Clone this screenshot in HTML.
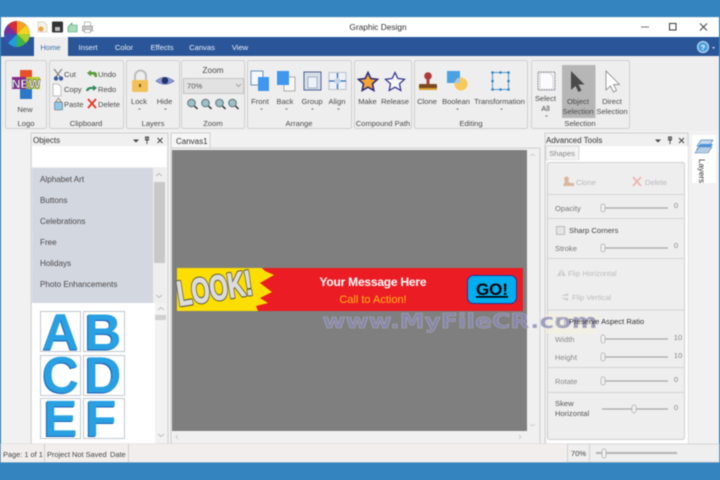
<!DOCTYPE html>
<html><head><meta charset="utf-8"><style>
html,body{margin:0;padding:0;width:720px;height:480px;overflow:hidden;background:#3484c0}
svg{display:block;filter:blur(.45px)}
text{font-family:"Liberation Sans",sans-serif;font-size:7.600px;fill:#4a4a4a}
.m{text-anchor:middle}
.grp{fill:#eeeeee;stroke:#cfcfcf;stroke-width:1}
.th{fill:#f1f1f1;stroke:#a8a8a8;stroke-width:.7}
.tl{fill:none;stroke:#a8a8a8;stroke-width:1.300}
.tile{fill:#fff;stroke:#c2c8d0;stroke-width:1}
.lt{font-weight:bold;font-size:51px;fill:#29a0e2;text-anchor:middle}
.ls{font-weight:bold;font-size:51px;fill:#1a5fb4;text-anchor:middle}
.obj{font-size:8.100px}
</style></head><body>
<svg width="720" height="480" viewBox="0 0 720 480" xmlns="http://www.w3.org/2000/svg">
<rect width="720" height="480" fill="#3484c0"/>
<rect x="1" y="17" width="718" height="445" fill="#eeeeee"/>
<rect x="1" y="18" width="718" height="19" fill="#ffffff"/>
<rect x="1" y="37" width="718" height="19" fill="#2a5699"/>
<rect x="34" y="37" width="34" height="20" fill="#eeeeee"/>
<text x="50.500" y="50" class="m" style="fill:#3a6ea8">Home</text>
<text x="88" y="50" class="m" style="fill:#e8eef6">Insert</text><text x="124" y="50" class="m" style="fill:#e8eef6">Color</text><text x="162" y="50" class="m" style="fill:#e8eef6">Effects</text><text x="202" y="50" class="m" style="fill:#e8eef6">Canvas</text><text x="240" y="50" class="m" style="fill:#e8eef6">View</text>
<text x="378" y="30" class="m" style="font-size:8.300px;fill:#333">Graphic Design</text>
<path d="M641 27h8" stroke="#777" stroke-width="1"/>
<rect x="669.500" y="23.500" width="6.500" height="6.500" fill="none" stroke="#333" stroke-width="1"/>
<path d="M700 23.500l7 7M707 23.500l-7 7" stroke="#444" stroke-width="1"/>
<circle cx="703" cy="47" r="5.500" fill="#4a9fe0" stroke="#cfe4f6" stroke-width="1"/><text x="703" y="50" class="m" style="fill:#fff;font-weight:bold">?</text><path d="M712 47l3 0-1.500 2z" fill="#cfe0f0"/>
<!-- logo wheel -->
<circle cx="17" cy="34" r="13" fill="#2a5699"/>
<path d="M17 34L17 21A13 13 0 0 1 26 25z" fill="#f6a11c"/>
<path d="M17 34L26 25A13 13 0 0 1 30 34z" fill="#f7d31f"/>
<path d="M17 34L30 34A13 13 0 0 1 26 43z" fill="#a8d12a"/>
<path d="M17 34L26 43A13 13 0 0 1 17 47z" fill="#3cb44a"/>
<path d="M17 34L17 47A13 13 0 0 1 8 43z" fill="#1e9fd8"/>
<path d="M17 34L8 43A13 13 0 0 1 4 34z" fill="#3b4fb0"/>
<path d="M17 34L4 34A13 13 0 0 1 8 25z" fill="#7a2f9c"/>
<path d="M17 34L8 25A13 13 0 0 1 17 21z" fill="#d92a3a"/>
<!-- QAT icons -->
<path d="M38 22h6l3 3v7h-9z" fill="#f6f2e8" stroke="#cfc8b8" stroke-width=".7"/><circle cx="41" cy="29" r="2.500" fill="#eea33a"/>
<rect x="52" y="21.500" width="11" height="11" rx="1" fill="#333"/><rect x="55" y="27" width="5" height="4" fill="#bbb"/>
<path d="M68 27l4-4v2h5v7h-9z" fill="#a8dcb8" stroke="#3d9a62" stroke-width=".6"/>
<rect x="82.500" y="26" width="10" height="5" fill="#c8c8c8" stroke="#888" stroke-width=".6"/><rect x="84.500" y="22" width="6" height="4" fill="#fff" stroke="#999" stroke-width=".6"/><rect x="84.500" y="29.500" width="6" height="3" fill="#fff" stroke="#999" stroke-width=".6"/>
<!-- ribbon groups -->
<rect x="5.500" y="60.500" width="41" height="68" rx="2" class="grp"/>
<rect x="49.500" y="60.500" width="74" height="68" rx="2" class="grp"/>
<rect x="126.500" y="60.500" width="53" height="68" rx="2" class="grp"/>
<rect x="181.500" y="60.500" width="63" height="68" rx="2" class="grp"/>
<rect x="247.500" y="60.500" width="104" height="68" rx="2" class="grp"/>
<rect x="354.500" y="60.500" width="57" height="68" rx="2" class="grp"/>
<rect x="414.500" y="60.500" width="113" height="68" rx="2" class="grp"/>
<rect x="531.500" y="60.500" width="98" height="68" rx="2" class="grp"/>
<text x="26" y="126" class="m">Logo</text><text x="86" y="126" class="m">Clipboard</text><text x="153" y="126" class="m">Layers</text><text x="213" y="126" class="m">Zoom</text><text x="299" y="126" class="m">Arrange</text><text x="383" y="126" class="m" style="font-size:7.500px">Compound Path</text><text x="471" y="126" class="m">Editing</text><text x="580" y="126" class="m">Selection</text>
<!-- New icon -->
<rect x="20" y="70" width="12" height="14" fill="#e8502a"/><rect x="20" y="84" width="12" height="15" fill="#2a78c8"/><rect x="12" y="77" width="14" height="12" fill="#8a2a90"/><rect x="26" y="77" width="14" height="12" fill="#b8cc30"/>
<text x="26" y="88" class="m" style="font-weight:bold;font-size:11.500px;fill:#fff;stroke:#3c2a5c;stroke-width:.4" textLength="29" lengthAdjust="spacingAndGlyphs">NEW</text>
<text x="25" y="112" class="m">New</text>
<!-- Clipboard -->
<path d="M54 69l7 9M62 69l-7 9" stroke="#888" stroke-width="1.300"/><circle cx="56" cy="78.500" r="2.200" fill="#3a5f9c"/><circle cx="61" cy="78.500" r="2.200" fill="#3a5f9c"/>
<text x="64" y="77">Cut</text>
<path d="M53 84h5l3 3v9h-8z" fill="#fff" stroke="#aaa" stroke-width=".7"/>
<text x="64" y="92">Copy</text>
<rect x="54.500" y="102" width="8" height="8" rx="1" fill="#8ec8ea" stroke="#666" stroke-width=".6"/><path d="M58.500 98l3 4h-6z" fill="#e8e0d0" stroke="#666" stroke-width=".6"/>
<text x="64" y="107">Paste</text>
<path d="M87 73l4-3v2h3c2 0 3 1 3 3v2h-2.500c0-2-1-2.500-2.500-2.500h-1v2z" fill="#5a9a3c"/>
<text x="98" y="77">Undo</text>
<path d="M97 88l-4-3v2h-3c-2 0-4 2-4 4h2.500c0-1.500 1.500-2 2.500-2h2v2z" fill="#2c8a5a"/>
<text x="98" y="92">Redo</text>
<path d="M88 99l8 9M96 99l-8 9" stroke="#e2362a" stroke-width="1.800"/>
<text x="98" y="107">Delete</text>
<!-- Lock / Hide -->
<path d="M135 82v-6a5 5 0 0 1 11 0v6" fill="none" stroke="#bdbdbd" stroke-width="2"/>
<rect x="132" y="80" width="16" height="12" rx="1.500" fill="#f2c25a"/><rect x="139" y="84" width="2" height="3" fill="#7a5a20"/>
<text x="139" y="104" class="m">Lock</text><path d="M138 108.500h3l-1.500 1.500z" fill="#777"/>
<path d="M156 81q8-7.500 18 0q-9 6.500-18 0z" fill="#8a9cd8" stroke="#4a5a9c" stroke-width=".6"/><circle cx="165" cy="80.500" r="3.300" fill="#23306a"/>
<text x="164.500" y="104" class="m">Hide</text><path d="M164 108.500h3l-1.500 1.500z" fill="#777"/>
<!-- Zoom -->
<text x="213" y="73" class="m" style="font-size:8.300px">Zoom</text>
<rect x="183.500" y="78.500" width="60" height="15" fill="#e2e2e2" stroke="#c4c4c4"/>
<text x="187" y="88.500" style="fill:#555">70%</text><path d="M236 84l2.500 2.500 2.500-2.500" fill="none" stroke="#888" stroke-width=".7"/>
<g fill="#9cc0c8" stroke="#5f6f78" stroke-width="1">
<circle cx="191.500" cy="103" r="3.800"/><circle cx="205.500" cy="103" r="3.800"/><circle cx="219.500" cy="103" r="3.800"/><circle cx="232.500" cy="103" r="3.800"/>
</g>
<path d="M194.500 106l3 3M208.500 106l3 3M222.500 106l3 3M235.500 106l3 3" stroke="#333" stroke-width="1.500"/>
<!-- Arrange -->
<rect x="251" y="71" width="12" height="14" fill="#f4f8fc" stroke="#4a7ab0" stroke-width=".8"/><rect x="258" y="77" width="11" height="14" fill="#3f97ee"/>
<text x="260" y="104" class="m">Front</text><path d="M260 108.500h3l-1.500 1.500z" fill="#777"/>
<rect x="284" y="77" width="11" height="14" fill="#f6f6f6" stroke="#9a9a9a" stroke-width=".8"/><rect x="277" y="71" width="12" height="14" fill="#3f97ee"/>
<text x="285" y="104" class="m">Back</text><path d="M285 108.500h3l-1.500 1.500z" fill="#777"/>
<rect x="304" y="72" width="17" height="18" fill="#d6dfe8" stroke="#2a3f80" stroke-width=".8"/><rect x="308" y="77" width="9" height="11" fill="#eef3f8" stroke="#7a8ea8" stroke-width=".6"/>
<text x="312" y="104" class="m">Group</text><path d="M311 108.500h3l-1.500 1.500z" fill="#777"/>
<rect x="329" y="72.500" width="17" height="17" fill="#eef2f6" stroke="#a8b0b8" stroke-width=".7"/><path d="M337.500 73v16M329 81h17" stroke="#2a6ab8" stroke-width="1.300"/><circle cx="337.500" cy="81" r="3" fill="#c4d4e4"/>
<text x="337" y="104" class="m">Align</text><path d="M337 108.500h3l-1.500 1.500z" fill="#777"/>
<!-- Compound -->
<path d="M368 72.500l2.800 6 6.700.8-5 4.500 1.300 6.700-5.800-3.300-5.800 3.300 1.300-6.700-5-4.500 6.700-.8z" fill="#f6a432" stroke="#2c2c80" stroke-width="1.600"/>
<text x="367.500" y="104" class="m">Make</text>
<path d="M395 72.500l2.800 6 6.700.8-5 4.500 1.300 6.700-5.800-3.300-5.800 3.300 1.300-6.700-5-4.500 6.700-.8z" fill="#f6f6f6" stroke="#2c2c90" stroke-width="1.200"/>
<text x="395" y="104" class="m">Release</text>
<!-- Editing -->
<circle cx="428" cy="76" r="3.800" fill="#b03a3a"/><rect x="426.500" y="79" width="3" height="5" fill="#a84040"/><rect x="419" y="84" width="18" height="5" rx="1" fill="#7a4a20"/><rect x="419" y="88" width="18" height="2" fill="#d8a030"/>
<rect x="447" y="71" width="13" height="12" fill="#4aa2e0"/><circle cx="461" cy="84" r="6.500" fill="#f8c95a"/><path d="M454.500 83h5.500v-5.500a6.500 6.500 0 0 0-5.500 5.500z" fill="#a8c8e0"/>
<text x="427" y="104" class="m">Clone</text><text x="456" y="104" class="m">Boolean</text><path d="M456 108.500h3l-1.500 1.500z" fill="#777"/>
<rect x="492.500" y="72.500" width="16" height="17" fill="none" stroke="#2a80c8" stroke-width=".8"/>
<g fill="#2a80c8"><circle cx="492.500" cy="72.500" r="1.300"/><circle cx="500.500" cy="72.500" r="1.300"/><circle cx="508.500" cy="72.500" r="1.300"/><circle cx="492.500" cy="89.500" r="1.300"/><circle cx="500.500" cy="89.500" r="1.300"/><circle cx="508.500" cy="89.500" r="1.300"/><circle cx="492.500" cy="81" r="1.300"/><circle cx="508.500" cy="81" r="1.300"/></g>
<text x="499.500" y="104" class="m">Transformation</text><path d="M500 108.500h3l-1.500 1.500z" fill="#777"/>
<!-- Selection -->
<rect x="538" y="72" width="17" height="18" fill="none" stroke="#555" stroke-width=".7" stroke-dasharray="1.500 1"/><path d="M540 73h10l3 4v12h-13z" fill="#fbfbff" stroke="#c0c8d4" stroke-width=".6"/>
<text x="545.500" y="101" class="m">Select</text><text x="545.500" y="111" class="m">All</text><path d="M545 115.500h3l-1.500 1.500z" fill="#777"/>
<rect x="562" y="65" width="33.500" height="53" fill="#b6b6b6"/>
<path d="M571 71l0 19 4.500-4 3 6 3-1.500-3-6h6z" fill="#4a4a4a"/>
<text x="578" y="104" class="m">Object</text><text x="578" y="114" class="m">Selection</text>
<path d="M606 71l0 19 4.500-4 3 6 3-1.500-3-6h6z" fill="#fff" stroke="#777" stroke-width=".7"/>
<text x="612" y="104" class="m">Direct</text><text x="612" y="114" class="m">Selection</text>
<!-- body -->
<rect x="1" y="130" width="718" height="314" fill="#f1f1f1"/>
<!-- objects panel -->
<rect x="31" y="133" width="137" height="311" fill="#f0f0f0" stroke="#cfcfcf"/>
<rect x="32" y="146" width="135" height="21" fill="#fff"/>
<text x="33" y="143" style="fill:#333;font-size:8px">Objects</text>
<path d="M133 139.500h6l-3 3z" fill="#444"/><path d="M147 137v4M145.500 137h3v3h-3zM147 141v3" stroke="#444" stroke-width=".9" fill="none"/><path d="M157.500 138l5 5M162.500 138l-5 5" stroke="#444" stroke-width="1"/>
<rect x="32" y="168" width="121" height="135" fill="#d3d7e0"/>
<rect x="153" y="168" width="12" height="135" fill="#eeeeee"/><rect x="154" y="182" width="11" height="81" fill="#c8c8c8"/>
<path d="M156 176l3-2.500 3 2.500M156 295l3 2.500 3-2.500" fill="none" stroke="#aaa" stroke-width=".8"/>
<text x="40" y="182" class="obj">Alphabet Art</text><text x="40" y="203" class="obj">Buttons</text><text x="40" y="224" class="obj">Celebrations</text><text x="40" y="245" class="obj">Free</text><text x="40" y="266" class="obj">Holidays</text><text x="40" y="287" class="obj">Photo Enhancements</text>
<rect x="32" y="303" width="123" height="141" fill="#fff"/>
<rect x="155" y="303" width="11" height="141" fill="#f2f2f2"/><rect x="155" y="315" width="11" height="5" fill="#cfcfcf"/>
<path d="M158 310l3-2.500 3 2.500M158 434l3 2.500 3-2.500" fill="none" stroke="#aaa" stroke-width=".8"/>
<rect x="40.500" y="311.500" width="40" height="40" class="tile"/><rect x="83.500" y="311.500" width="41" height="40" class="tile"/>
<rect x="40.500" y="355.500" width="40" height="40" class="tile"/><rect x="83.500" y="355.500" width="41" height="40" class="tile"/>
<rect x="40.500" y="398.500" width="40" height="40" class="tile"/><rect x="83.500" y="398.500" width="41" height="40" class="tile"/>
<text x="59.800" y="350.500" class="ls">A</text><text x="102" y="350.500" class="ls">B</text><text x="59.800" y="393.500" class="ls">C</text><text x="102" y="393.500" class="ls">D</text><text x="59.500" y="437" class="ls">E</text><text x="100" y="437" class="ls">F</text>
<text x="60.500" y="349.500" class="lt">A</text><text x="103" y="349.500" class="lt">B</text><text x="60.500" y="392.500" class="lt">C</text><text x="103" y="392.500" class="lt">D</text><text x="60.500" y="436" class="lt">E</text><text x="101" y="436" class="lt">F</text>
<!-- canvas -->
<rect x="171" y="133" width="39" height="15" fill="#f6f6f6" stroke="#cfcfcf"/>
<text x="176" y="144" style="fill:#333;font-size:8px">Canvas1</text>
<rect x="171" y="148" width="369" height="296" fill="#f0f0f0" stroke="#cfcfcf"/>
<rect x="172" y="150" width="355" height="281" fill="#7f7f7f"/>
<path d="M530 156l2.500-2 2.500 2M530 424l2.500 2 2.500-2M178 435l-2 2 2 2M519 435l2 2-2 2" fill="none" stroke="#c4c4c4" stroke-width=".8"/>
<!-- banner -->
<rect x="177" y="268" width="346" height="43" fill="#ec1c24"/>
<path d="M177 268H262L265 271L274 275L260 283L272 292L260 298L268 303L256 306L258 311H177z" fill="#fede00"/>
<g transform="translate(179,306) rotate(-9) scale(1,1.250)"><text x="0" y="0" style="font-weight:bold;font-size:28px;fill:#5a5a40;stroke:#5a5a40;stroke-width:2.600;stroke-linejoin:round" textLength="76" lengthAdjust="spacingAndGlyphs">LOOK!</text><text x="0" y="0" style="font-weight:bold;font-size:28px;fill:#dcdcdc;stroke:#dcdcdc;stroke-width:.9;stroke-linejoin:round" textLength="76" lengthAdjust="spacingAndGlyphs">LOOK!</text></g>
<text x="373" y="286" class="m" style="font-size:12px;font-weight:bold;fill:#fff" textLength="107">Your Message Here</text>
<text x="373" y="303" class="m" style="font-size:11px;fill:#fdb913">Call to Action!</text>
<rect x="467.500" y="275.500" width="49" height="28" rx="6" fill="#00aeef" stroke="#2e3192" stroke-width="1"/>
<text x="492" y="295" class="m" style="font-weight:bold;font-size:17px;fill:#000;text-decoration:underline">GO!</text>
<!-- right panel -->
<rect x="545" y="133" width="143" height="311" fill="#f0f0f0" stroke="#cfcfcf"/>
<rect x="546" y="146" width="142" height="14" fill="#fff"/>
<text x="546" y="143" style="fill:#333;font-size:8px">Advanced Tools</text>
<path d="M655 139.500h6l-3 3z" fill="#444"/><path d="M670 137v4M668.500 137h3v3h-3zM670 141v3" stroke="#444" stroke-width=".9" fill="none"/><path d="M679 138l5 5M684 138l-5 5" stroke="#444" stroke-width="1"/>
<rect x="546" y="146" width="33" height="14" fill="#f2f2f2" stroke="#d8d8d8"/>
<text x="562" y="156" class="m" style="fill:#888">Shapes</text>
<rect x="547" y="160" width="141" height="284" fill="#fff"/>
<rect x="547.500" y="162.500" width="137" height="277" rx="2" fill="#eeeeee" stroke="#cfcfcf"/>
<path d="M548 194.500h137M548 218.500h137M548 258.500h137M548 310h137M548 367.500h137M548 392.500h137" stroke="#d4d4d4" stroke-width="1"/>
<path d="M563 186l2-5a2.500 2.500 0 1 1 3 0l2 2h4v3z" fill="#d8b8a0"/>
<text x="576" y="185" style="fill:#b8b8b8">Clone</text>
<path d="M633 177l8 9M641 177l-8 9" stroke="#eeb0a8" stroke-width="1.600"/>
<text x="645" y="185" style="fill:#b8b8b8">Delete</text>
<text x="555" y="211" style="fill:#777">Opacity</text>
<text x="555" y="251" style="fill:#777">Stroke</text>
<rect x="556.500" y="226.500" width="8" height="8" fill="#e4e4e4" stroke="#bbb"/>
<text x="569" y="233" style="fill:#444">Sharp Corners</text>
<text x="568" y="276" style="fill:#bcbcbc">Flip Horizontal</text><path d="M557 276l4-7v7zM562 276v-7l4 7z" fill="#cfcfcf"/>
<text x="572" y="300" style="fill:#bcbcbc">Flip Vertical</text><path d="M561 296l7-3v3zM561 298h7v3z" fill="#cfcfcf"/>
<text x="555" y="342" style="fill:#888">Width</text><text x="555" y="360" style="fill:#888">Height</text><text x="555" y="384" style="fill:#888">Rotate</text><text x="555" y="406" style="fill:#555">Skew</text><text x="555" y="416" style="fill:#555">Horizontal</text>
<path d="M602 208h66M602 248h66M602 339h66M602 357h66M602 381h66M602 409h66" class="tl"/>
<rect x="601" y="204" width="4" height="8" rx="2" class="th"/><rect x="601" y="244" width="4" height="8" rx="2" class="th"/><rect x="601" y="335" width="4" height="8" rx="2" class="th"/><rect x="601" y="353" width="4" height="8" rx="2" class="th"/><rect x="601" y="377" width="4" height="8" rx="2" class="th"/><rect x="632" y="405" width="4" height="8" rx="2" class="th"/>
<text x="676" y="208" class="m" style="fill:#888">0</text><text x="676" y="248" class="m" style="fill:#888">0</text><text x="678" y="340" class="m" style="fill:#888">10</text><text x="678" y="358" class="m" style="fill:#888">10</text><text x="676" y="382" class="m" style="fill:#888">0</text><text x="676" y="410" class="m" style="fill:#888">0</text>
<!-- layers tab -->
<rect x="692" y="135" width="24" height="48" fill="#fff"/>
<path d="M697 146l4-6h12l-4 6z" fill="#c8d8ec" stroke="#5a8ac0" stroke-width=".7"/><path d="M696 150l4-6h13l-4 6z" fill="#4a90dc"/><path d="M695 153l4-6h13l-4 6z" fill="#b8cce4" stroke="#5a8ac0" stroke-width=".6"/>
<text transform="translate(699,159) rotate(90)" style="font-size:8px;fill:#333">Layers</text>
<!-- watermark -->
<rect x="545" y="314" width="53" height="20" fill="#f5f0dc" opacity=".55"/>
<text x="460" y="328" class="m" style="font-family:'DejaVu Sans',sans-serif;font-weight:bold;font-size:20px;fill:#8a8ab8;opacity:.8;stroke:#f5f0d8;stroke-opacity:.3;stroke-width:.8" textLength="275" lengthAdjust="spacingAndGlyphs">www.MyFileCR.com</text>
<rect x="556.500" y="317.500" width="8" height="8" fill="none" stroke="#bbb"/>
<text x="569" y="324" style="fill:#333">Preserve Aspect Ratio</text>
<!-- status bar -->
<rect x="1" y="444" width="718" height="18" fill="#efefef" stroke="#d4d4d4"/>
<rect x="1" y="444" width="566" height="18" fill="#f2eeee"/>
<path d="M44.500 444v18M128.500 444v18M567.500 444v18M589.500 444v18" stroke="#d0d0d0"/>
<text x="3" y="457" style="fill:#444;font-size:7.400px">Page: 1 of 1</text><text x="47" y="457" style="fill:#444;font-size:7.400px">Project Not Saved</text><text x="110" y="457" style="fill:#444;font-size:7.400px">Date</text>
<text x="578.500" y="456" class="m" style="fill:#444">70%</text>
<path d="M596 453h81" stroke="#b4b4b4" stroke-width="2"/><rect x="602" y="449" width="4" height="9" rx="2" class="th"/>
</svg>
</body></html>
